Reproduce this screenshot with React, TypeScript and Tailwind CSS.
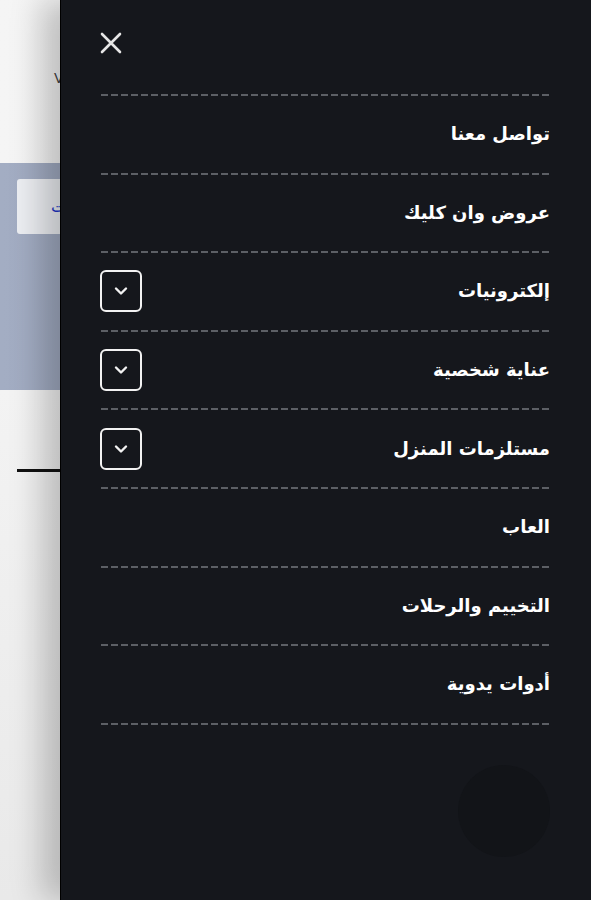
import React from "react";

const items: { label: string; expandable?: boolean }[] = [
  { label: "تواصل معنا" },
  { label: "عروض وان كليك" },
  { label: "إلكترونيات", expandable: true },
  { label: "عناية شخصية", expandable: true },
  { label: "مستلزمات المنزل", expandable: true },
  { label: "العاب" },
  { label: "التخييم والرحلات" },
  { label: "أدوات يدوية" },
];

function Dashed() {
  return (
    <div className="h-[2px] w-full bg-[repeating-linear-gradient(to_right,transparent_0px,transparent_1.5px,#5c5f65_1.5px,#5c5f65_8.5px,transparent_8.5px,transparent_10px)]" />
  );
}

export default function App() {
  return (
    <div className="relative h-[900px] w-full overflow-hidden bg-white font-['DejaVu_Sans',sans-serif]">
      {/* underlying page */}
      <div className="flex h-full flex-col">
        <div className="h-[163px] bg-gradient-to-r from-[#f5f5f5] to-[#ededed] pl-[54px] pt-[68px] text-[14px] text-[#444]">
          V
        </div>
        <div className="h-[227px] bg-gradient-to-r from-[#a3adc3] to-[#8c98b3] pl-[17px] pt-[16px]">
          <div className="flex h-[55px] w-[140px] items-center rounded-[3px] bg-[#eceef2] pl-[34px] text-[16px] text-[#2036c8]">
            ت
          </div>
        </div>
        <div className="flex-1 bg-gradient-to-b from-[#f3f3f3] to-[#e9e9e9] pt-[79px] pl-[17px]">
          <div className="h-[3px] w-[200px] bg-[#111]" />
        </div>
      </div>

      {/* drawer */}
      <div className="absolute right-0 top-0 flex h-full w-[531px] flex-col border-l border-black bg-[#15171c] pl-[39px] pr-[41px] shadow-[-18px_0_30px_rgba(0,0,0,0.22)]">
        <div className="flex h-[94px] items-start pt-[32px]">
          <svg width="22" height="22" viewBox="0 0 22 22" className="text-[#e6e6e6]">
            <path d="M2 2 L20 20 M20 2 L2 20" stroke="currentColor" strokeWidth="2.6" strokeLinecap="round" />
          </svg>
        </div>
        <Dashed />
        <div dir="rtl" className="flex flex-col">
          {items.map((it) => (
            <div key={it.label} className="flex flex-col">
              <div className="flex h-[76.6px] items-center justify-between">
                <span className="text-[18px] font-bold leading-none text-white">{it.label}</span>
                {it.expandable && (
                  <div className="flex h-[42px] w-[42px] items-center justify-center rounded-[6px] border-2 border-[#f2f2f2]">
                    <svg width="14" height="10" viewBox="0 0 14 10">
                      <path d="M2 2.5 L7 7.5 L12 2.5" fill="none" stroke="#f2f2f2" strokeWidth="2.4" strokeLinecap="round" strokeLinejoin="round" />
                    </svg>
                  </div>
                )}
              </div>
              <Dashed />
            </div>
          ))}
        </div>
        {/* faint background artifacts */}
        <div className="flex flex-1 justify-end pt-[40px]">
          <div className="h-[92px] w-[92px] rounded-full bg-[#121418]" />
        </div>
      </div>
    </div>
  );
}
